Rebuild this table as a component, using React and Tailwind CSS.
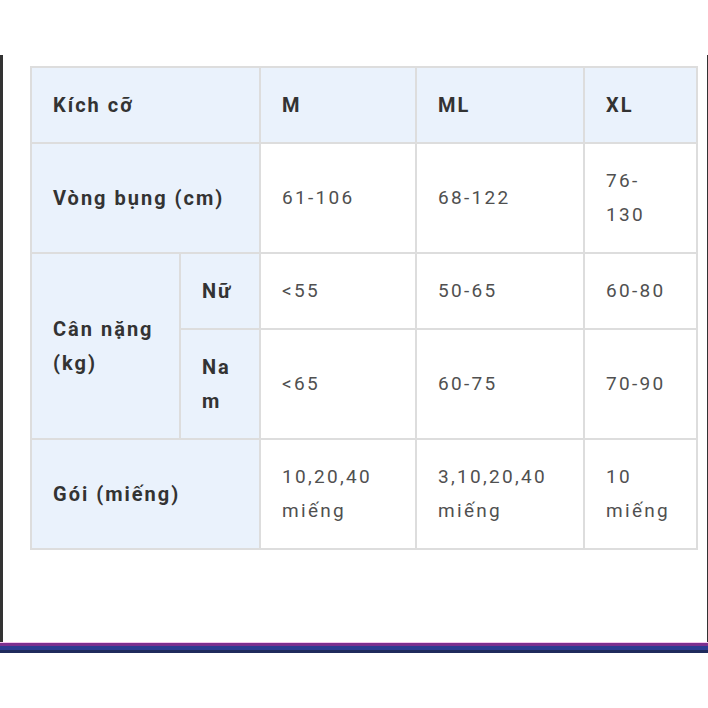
const th = 'border-2 border-[#dddddd] bg-[#eaf2fc] px-[21px] py-[20px] text-left align-middle font-bold text-[20px] leading-[34px] tracking-[2px] text-[#333333]';
const td = 'border-2 border-[#dddddd] bg-white px-[21px] py-[20px] text-left align-middle text-[19px] leading-[34px] tracking-[2.3px] text-[#505050]';

export default function App() {
  return (
    <div className="min-h-screen bg-white pt-[55px] font-['Roboto','Noto_Sans',sans-serif]">
      <div className="border-l-[3px] border-r border-[#333333] pl-[27px] pt-[11px] pb-[92px]">
        <table className="table-fixed border-collapse w-[666px]">
          <colgroup>
            <col className="w-[149px]" />
            <col className="w-[80px]" />
            <col className="w-[156px]" />
            <col className="w-[168px]" />
            <col className="w-[113px]" />
          </colgroup>
          <tbody>
            <tr>
              <th colSpan={2} className={th}>Kích cỡ</th>
              <th className={th}>M</th>
              <th className={th}>ML</th>
              <th className={th}>XL</th>
            </tr>
            <tr>
              <th colSpan={2} className={th}>Vòng bụng (cm)</th>
              <td className={td}>61-106</td>
              <td className={td}>68-122</td>
              <td className={td}>76-130</td>
            </tr>
            <tr>
              <th rowSpan={2} className={th}>Cân nặng (kg)</th>
              <th className={th + ' [overflow-wrap:anywhere]'}>Nữ</th>
              <td className={td}>&lt;55</td>
              <td className={td}>50-65</td>
              <td className={td}>60-80</td>
            </tr>
            <tr>
              <th className={th + ' [overflow-wrap:anywhere]'}>Nam</th>
              <td className={td}>&lt;65</td>
              <td className={td}>60-75</td>
              <td className={td}>70-90</td>
            </tr>
            <tr>
              <th colSpan={2} className={th}>Gói (miếng)</th>
              <td className={td}>10,20,40 miếng</td>
              <td className={td}>3,10,20,40 miếng</td>
              <td className={td}>10 miếng</td>
            </tr>
          </tbody>
        </table>
      </div>
      <div className="flex flex-col">
        <div className="h-px bg-[#f6c8ef]" />
        <div className="h-[3px] bg-[#7d2f8f]" />
        <div className="h-1 bg-[#2e3b92]" />
        <div className="h-[3px] bg-[#1f2a5c]" />
      </div>
    </div>
  );
}
